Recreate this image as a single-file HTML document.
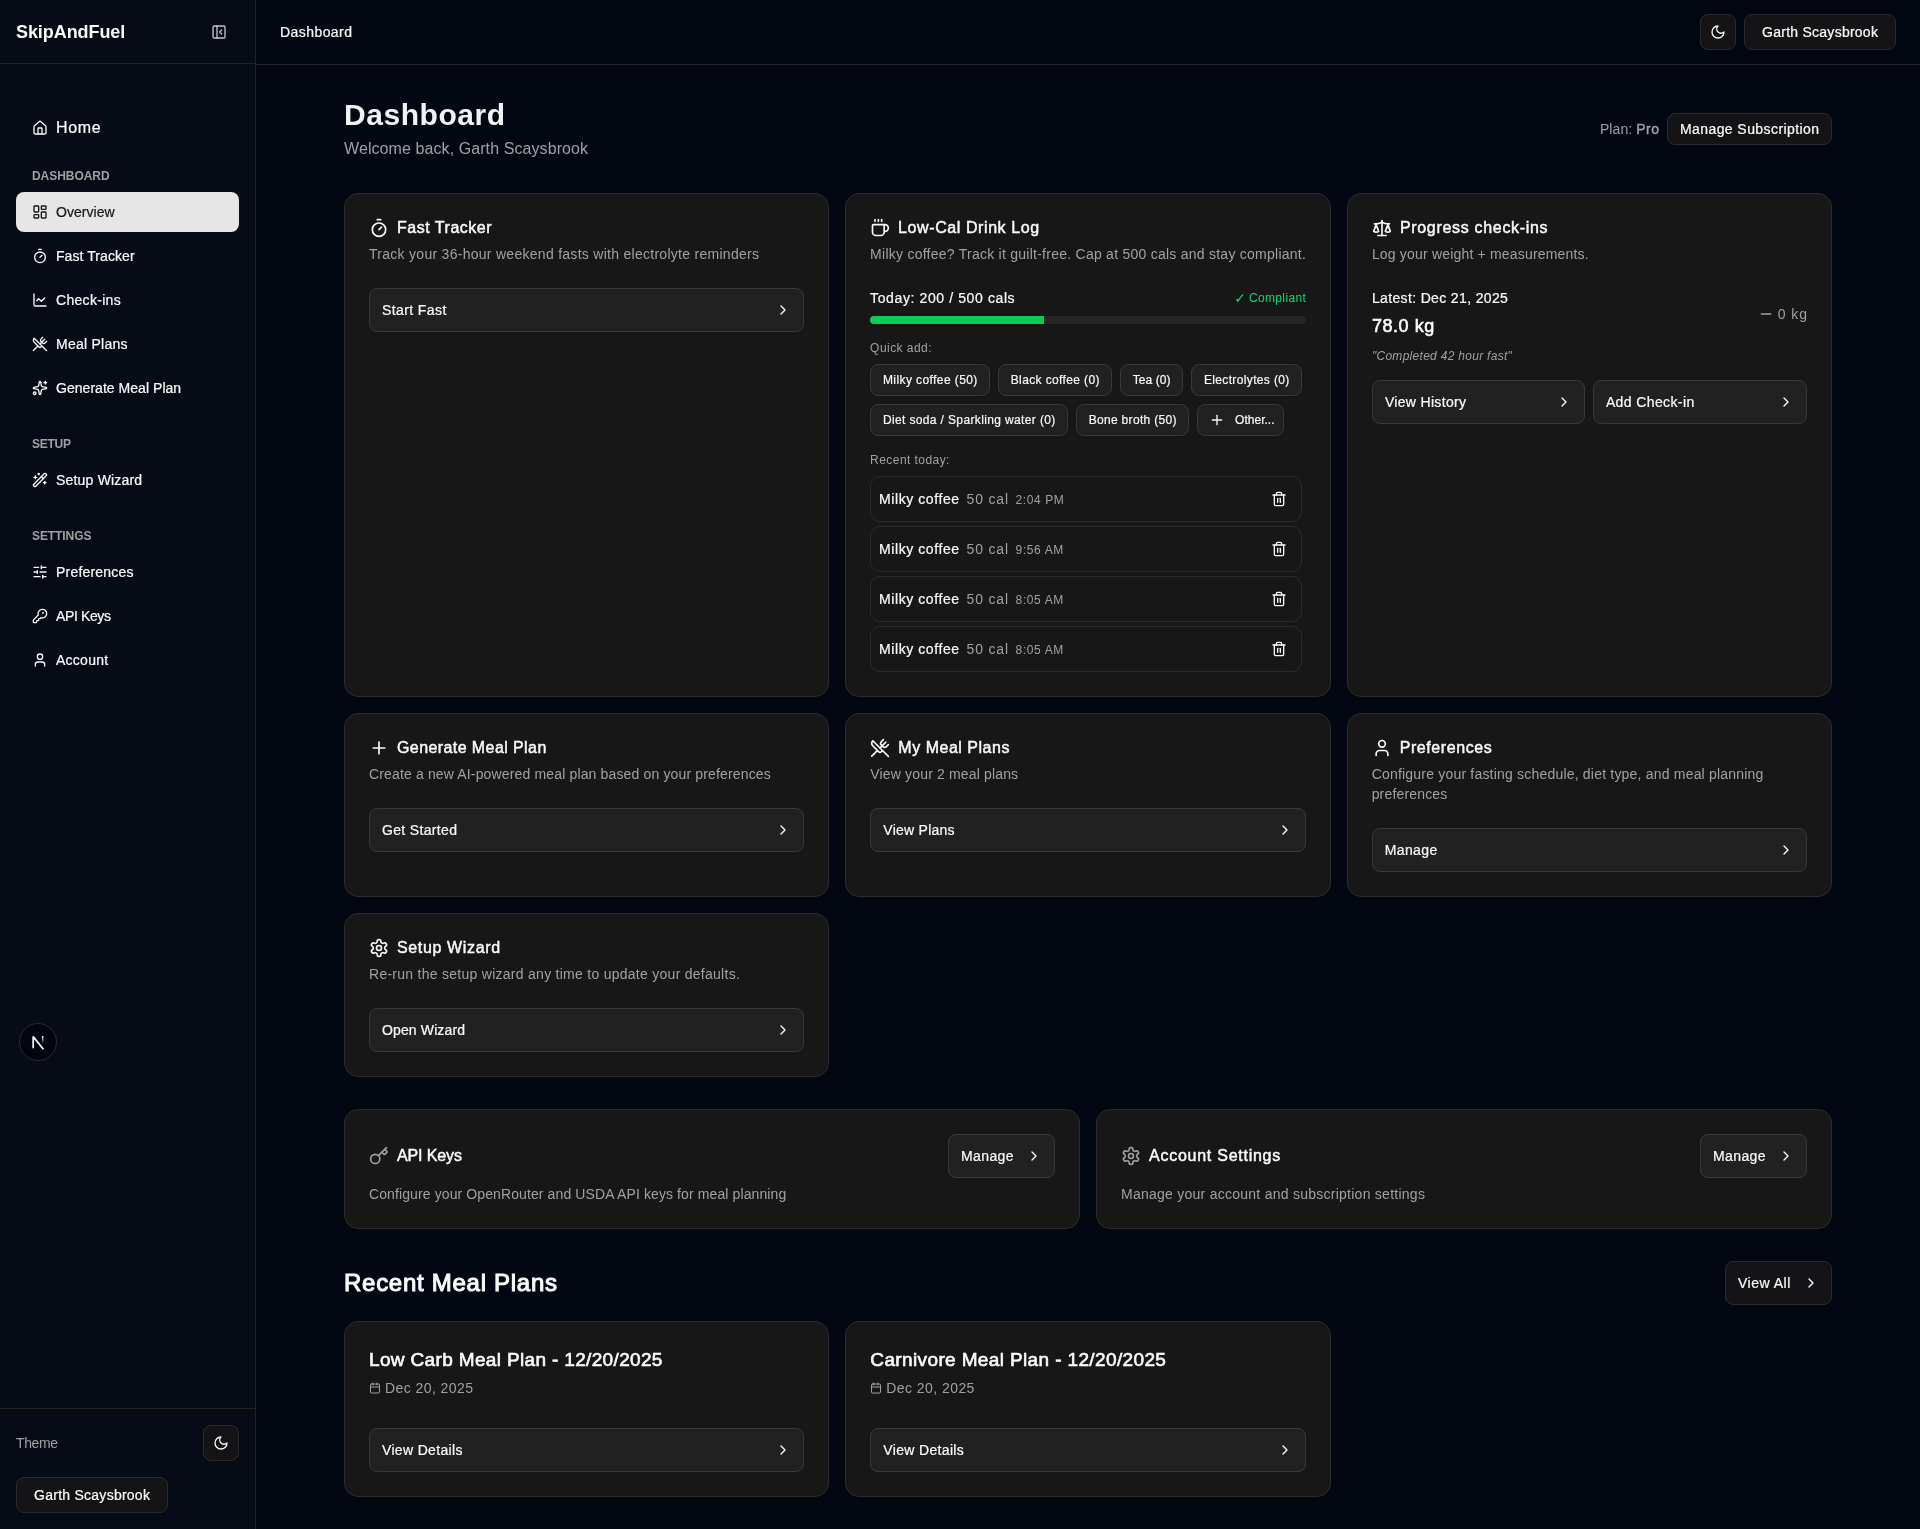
<!DOCTYPE html>
<html lang="en"><head><meta charset="utf-8"><title>SkipAndFuel - Dashboard</title>
<meta name="viewport" content="width=1920">
<style>
*{box-sizing:border-box;margin:0;padding:0}
html,body{width:1920px;height:1529px;overflow:hidden}
body{background:#030712;color:#fafafa;font-family:"Liberation Sans",sans-serif;font-size:14px;line-height:20px;position:relative;-webkit-font-smoothing:antialiased}
svg{display:block;flex:none}
span{white-space:nowrap}
.muted{color:#a1a1a1}
.med{font-weight:400;-webkit-text-stroke:.22px currentColor}
.semi{font-weight:400;-webkit-text-stroke:.029em currentColor}
a{color:inherit;text-decoration:none}

/* sidebar */
.sidebar{will-change:transform;position:absolute;left:0;top:0;width:256px;height:1529px;background:#070b16;border-right:1px solid #232323}
.sb-head{position:absolute;left:0;top:0;width:255px;height:64px;border-bottom:1px solid #232323}
.brand{position:absolute;left:16px;top:18px;font-size:18px;line-height:28px;font-weight:700}
.toggle{position:absolute;left:211px;top:24px;color:#c6c6c6}
.sb-nav{position:absolute;left:0;top:0;width:255px}
.nav{position:absolute;left:16px;width:223px;height:40px;border-radius:8px;display:flex;align-items:center;gap:8px;padding-left:16px;font-size:14px;-webkit-text-stroke:.22px currentColor}
.nav.big{font-size:16px}
.nav.active{background:#e6e6e6;color:#171717}
.navlabel{position:absolute;left:32px;height:16px;font-size:12px;line-height:16px;font-weight:700;color:#a1a1a1;letter-spacing:0}
.nextbadge{position:absolute;left:19px;top:1023px;width:38px;height:38px;border-radius:50%;background:#02050f;border:1px solid #2b2b29;display:flex;align-items:center;justify-content:center}
.sb-foot{position:absolute;left:0;top:1408px;width:255px;height:121px;border-top:1px solid #232323}
.theme-row{position:absolute;left:16px;top:16px;width:223px;height:36px;display:flex;align-items:center;justify-content:space-between}
.sb-foot .user-btn{position:absolute;left:16px;top:68px}

/* buttons */
.btn{display:inline-flex;align-items:center;border:1px solid #2b2b2e;background:#141417;border-radius:8px;color:#fafafa;font-size:14px}
.icon-btn{width:36px;height:36px;justify-content:center}
.user-btn{width:152px;height:36px;justify-content:center}

/* top bar */
.mainwrap{will-change:transform;position:absolute;left:256px;top:0;width:1664px;height:1529px}
.topbar{position:absolute;left:0;top:0;width:1664px;height:65px;border-bottom:1px solid #222326}
.crumb{position:absolute;left:24px;top:22px}
.top-right{position:absolute;right:24px;top:14px;display:flex;gap:8px}

/* content */
.content{position:absolute;left:88px;top:0;width:1488px;height:1529px}
.pagehead{position:absolute;left:0;top:97px;width:1488px;height:64px;display:flex;justify-content:space-between;align-items:center}
h1{font-size:30px;line-height:36px;font-weight:700;color:#f2f2f2}
.welcome{font-size:16px;line-height:24px;margin-top:4px}
.plan{display:flex;align-items:center;gap:8px}
.plantext{font-size:14px}
.plantext .semi{color:#a1a1a1}
.sub-btn{height:32px;width:165px;justify-content:center}

.grid3{position:absolute;left:0;width:1488px;display:grid;grid-template-columns:repeat(3,1fr);gap:16px}
.grid2{position:absolute;left:0;width:1488px;display:grid;grid-template-columns:repeat(2,1fr);gap:16px}
.card{background:#171717;border:1px solid #2c2c2c;border-radius:14px;padding:24px;position:relative}
.chead{display:flex;flex-direction:column;gap:6px}
.ctitle{display:flex;align-items:center;gap:8px;height:20px;font-size:16px;line-height:20px}
.cdesc{color:#a1a1a1;font-size:14px;line-height:20px}
.cbody{margin-top:24px}
.card .btn{background:#212121;border-color:#393939}
.wide{display:flex;justify-content:space-between;height:44px;padding:0 12px 0 12px;width:100%}
.wide svg{margin-right:0}

/* drink card */
.today{display:flex;justify-content:space-between;align-items:center;height:20px}
.ok{display:flex;align-items:center;gap:2px;color:#0bdc6c;font-size:12px}
.ck{font-family:"DejaVu Sans",sans-serif;font-size:14px;line-height:16px;position:relative;top:0;margin-right:1px}
.bar{margin-top:8px;height:8px;border-radius:4px;background:#262626;overflow:hidden}
.bar i{display:block;width:40%;height:8px;background:#0bcb55}
.small{font-size:12px;line-height:16px}
.qa{margin-top:16px}
.chips{display:flex;gap:8px;margin-top:8px}
.chip{height:32px;padding:0;justify-content:center;font-size:12px;gap:8px}
.chip.hasicon{padding:0 0 0 11px;gap:10px;justify-content:flex-start}
.chip .med{-webkit-text-stroke:.2px currentColor}
.rt{margin-top:16px;margin-bottom:8px}
.drink{height:46px;border:1px solid #2c2c2c;border-radius:10px;margin-top:4px;display:flex;align-items:center;justify-content:space-between;padding:0 4px 0 8px;width:432px}
.rt + .drink{margin-top:0}
.dl{display:flex;align-items:baseline;gap:7.500px}
.dcal{font-size:14px}
.dtime{font-size:12px}
.trash{width:36px;height:36px;display:flex;align-items:center;justify-content:center}

/* progress card */
.latest{display:flex;justify-content:space-between;align-items:center;height:52px}
.l1{font-size:14px;line-height:20px}
.l2{font-size:18px;line-height:28px;margin-top:4px}
.delta{display:flex;align-items:center;gap:4px;font-size:14px}
.quote{font-size:12px;line-height:16px;font-style:italic;margin-top:8px}
.two{display:grid;grid-template-columns:213px 1fr;gap:8px;margin-top:16px}

/* api cards */
.acard{height:120px}
.arow{display:flex;justify-content:space-between;align-items:center;height:44px}
.acard .cdesc{margin-top:6px}
.small-wide{height:44px;padding:0 12px;width:107px;justify-content:space-between}
.dim{color:#a1a1a1}

.recent{position:absolute;left:0;width:1488px;height:44px;display:flex;justify-content:space-between;align-items:center}
h2{font-size:24px;line-height:32px;font-weight:700}
.viewall{height:44px;padding:0 12px;width:107px;justify-content:space-between}

.pcard{height:176px}
.ptitle{font-size:19px;line-height:28px}
.pdate{display:flex;align-items:center;gap:4px;font-size:14px;line-height:20px;margin-top:4px}
.pcard .wide{position:absolute;left:24px;right:24px;top:106px;width:auto}
h2 .semi{-webkit-text-stroke:.042em currentColor}
.ptitle .semi,.l2 .semi{-webkit-text-stroke:.034em currentColor}

</style></head>
<body>

<aside class="sidebar">
  <div class="sb-head"><span id="t1" class="brand" style="letter-spacing:-0.076px;margin-right:0.076px">SkipAndFuel</span><span class="toggle"><svg width="16" height="16" viewBox="0 0 24 24" fill="none" stroke="currentColor" stroke-width="2" stroke-linecap="round" stroke-linejoin="round"><rect width="18" height="18" x="3" y="3" rx="2"/><path d="M9 3v18"/><path d="m16 15-3-3 3-3"/></svg></span></div>
  <nav class="sb-nav">
    <a class="nav big" style="top:108px"><svg width="16" height="16" viewBox="0 0 24 24" fill="none" stroke="currentColor" stroke-width="2" stroke-linecap="round" stroke-linejoin="round"><path d="M15 21v-8a1 1 0 0 0-1-1h-4a1 1 0 0 0-1 1v8"/><path d="M3 10a2 2 0 0 1 .709-1.528l7-5.999a2 2 0 0 1 2.582 0l7 5.999A2 2 0 0 1 21 10v9a2 2 0 0 1-2 2H5a2 2 0 0 1-2-2z"/></svg><span id="t2" style="letter-spacing:0.651px;margin-right:-0.651px">Home</span></a>
    <div class="navlabel" style="top:168px"><span id="t3" style="letter-spacing:-0.045px;margin-right:0.045px">DASHBOARD</span></div>
    <a class="nav active" style="top:192px"><svg width="16" height="16" viewBox="0 0 24 24" fill="none" stroke="currentColor" stroke-width="2" stroke-linecap="round" stroke-linejoin="round"><rect width="7" height="9" x="3" y="3" rx="1"/><rect width="7" height="5" x="14" y="3" rx="1"/><rect width="7" height="9" x="14" y="12" rx="1"/><rect width="7" height="5" x="3" y="16" rx="1"/></svg><span id="t4" style="letter-spacing:0.031px;margin-right:-0.031px">Overview</span></a>
    <a class="nav" style="top:236px"><svg width="16" height="16" viewBox="0 0 24 24" fill="none" stroke="currentColor" stroke-width="2" stroke-linecap="round" stroke-linejoin="round"><line x1="10" x2="14" y1="2" y2="2"/><line x1="12" x2="15" y1="14" y2="11"/><circle cx="12" cy="14" r="8"/></svg><span id="t5" style="letter-spacing:0.073px;margin-right:-0.073px">Fast Tracker</span></a>
    <a class="nav" style="top:280px"><svg width="16" height="16" viewBox="0 0 24 24" fill="none" stroke="currentColor" stroke-width="2" stroke-linecap="round" stroke-linejoin="round"><path d="M3 3v16a2 2 0 0 0 2 2h16"/><path d="m19 9-5 5-4-4-3 3"/></svg><span id="t6" style="letter-spacing:0.309px;margin-right:-0.309px">Check-ins</span></a>
    <a class="nav" style="top:324px"><svg width="16" height="16" viewBox="0 0 24 24" fill="none" stroke="currentColor" stroke-width="2" stroke-linecap="round" stroke-linejoin="round"><path d="m16 2-2.3 2.300a3 3 0 0 0 0 4.200l1.800 1.800a3 3 0 0 0 4.200 0L22 8"/><path d="M15 15 3.300 3.300a4.200 4.200 0 0 0 0 6l7.300 7.300c.7.700 2 .7 2.800 0L15 15Zm0 0 7 7"/><path d="m2.100 21.800 6.400-6.300"/><path d="m19 5-7 7"/></svg><span id="t7" style="letter-spacing:0.243px;margin-right:-0.243px">Meal Plans</span></a>
    <a class="nav" style="top:368px"><svg width="16" height="16" viewBox="0 0 24 24" fill="none" stroke="currentColor" stroke-width="2" stroke-linecap="round" stroke-linejoin="round"><path d="M11.017 2.814a1 1 0 0 1 1.966 0l1.051 5.558a2 2 0 0 0 1.594 1.594l5.558 1.051a1 1 0 0 1 0 1.966l-5.558 1.051a2 2 0 0 0-1.594 1.594l-1.051 5.558a1 1 0 0 1-1.966 0l-1.051-5.558a2 2 0 0 0-1.594-1.594l-5.558-1.051a1 1 0 0 1 0-1.966l5.558-1.051a2 2 0 0 0 1.594-1.594z"/><path d="M20 2v4"/><path d="M22 4h-4"/><circle cx="4" cy="20" r="2"/></svg><span id="t8" style="letter-spacing:0.037px;margin-right:-0.037px">Generate Meal Plan</span></a>
    <div class="navlabel" style="top:436px"><span id="t9" style="letter-spacing:-0.254px;margin-right:0.254px">SETUP</span></div>
    <a class="nav" style="top:460px"><svg width="16" height="16" viewBox="0 0 24 24" fill="none" stroke="currentColor" stroke-width="2" stroke-linecap="round" stroke-linejoin="round"><path d="m21.640 3.640-1.280-1.280a1.210 1.210 0 0 0-1.720 0L2.360 18.640a1.210 1.210 0 0 0 0 1.720l1.280 1.280a1.200 1.200 0 0 0 1.720 0L21.640 5.360a1.200 1.200 0 0 0 0-1.720"/><path d="m14 7 3 3"/><path d="M5 6v4"/><path d="M19 14v4"/><path d="M10 2v2"/><path d="M7 8H3"/><path d="M21 16h-4"/><path d="M11 3H9"/></svg><span id="t10" style="letter-spacing:0.192px;margin-right:-0.192px">Setup Wizard</span></a>
    <div class="navlabel" style="top:528px"><span id="t11" style="letter-spacing:-0.085px;margin-right:0.085px">SETTINGS</span></div>
    <a class="nav" style="top:552px"><svg width="16" height="16" viewBox="0 0 24 24" fill="none" stroke="currentColor" stroke-width="2" stroke-linecap="round" stroke-linejoin="round"><path d="M10 5H3"/><path d="M12 19H3"/><path d="M14 3v4"/><path d="M16 17v4"/><path d="M21 12h-9"/><path d="M21 19h-5"/><path d="M21 5h-7"/><path d="M8 10v4"/><path d="M8 12H3"/></svg><span id="t12" style="letter-spacing:0.2px;margin-right:-0.2px">Preferences</span></a>
    <a class="nav" style="top:596px"><svg width="16" height="16" viewBox="0 0 24 24" fill="none" stroke="currentColor" stroke-width="2" stroke-linecap="round" stroke-linejoin="round"><path d="M2.586 17.414A2 2 0 0 0 2 18.828V21a1 1 0 0 0 1 1h3a1 1 0 0 0 1-1v-1a1 1 0 0 1 1-1h1a1 1 0 0 0 1-1v-1a1 1 0 0 1 1-1h.172a2 2 0 0 0 1.414-.586l.814-.814a6.500 6.500 0 1 0-4-4z"/><circle cx="16.500" cy="7.500" r=".5" fill="currentColor"/></svg><span id="t13" style="letter-spacing:-0.371px;margin-right:0.371px">API Keys</span></a>
    <a class="nav" style="top:640px"><svg width="16" height="16" viewBox="0 0 24 24" fill="none" stroke="currentColor" stroke-width="2" stroke-linecap="round" stroke-linejoin="round"><path d="M19 21v-2a4 4 0 0 0-4-4H9a4 4 0 0 0-4 4v2"/><circle cx="12" cy="7" r="4"/></svg><span id="t14" style="letter-spacing:0.254px;margin-right:-0.254px">Account</span></a>
  </nav>
  <div class="nextbadge"><svg width="36" height="36" viewBox="0 0 36 36" fill="none">
    <defs><linearGradient id="ng" gradientUnits="userSpaceOnUse" x1="0" y1="12" x2="0" y2="20"><stop offset="0" stop-color="#fff"/><stop offset="1" stop-color="#fff" stop-opacity="0"/></linearGradient></defs>
    <path d="M13.200 24.200V12.600L23.400 25.200" stroke="#fff" stroke-width="1.700" stroke-linejoin="bevel"/>
    <path d="M22.700 12v8" stroke="url(#ng)" stroke-width="1.500"/>
  </svg></div>
  <div class="sb-foot">
    <div class="theme-row"><span id="t15" class="muted" style="letter-spacing:-0.395px;margin-right:0.395px">Theme</span><span class="btn icon-btn"><svg width="16" height="16" viewBox="0 0 24 24" fill="none" stroke="currentColor" stroke-width="2" stroke-linecap="round" stroke-linejoin="round"><path d="M12 3a6 6 0 0 0 9 9 9 9 0 1 1-9-9Z"/></svg></span></div>
    <span class="btn user-btn"><span id="t16" class="med" style="letter-spacing:0.252px;margin-right:-0.252px">Garth Scaysbrook</span></span>
  </div>
</aside>
<div class="mainwrap">

<header class="topbar">
  <span id="t17" class="med crumb" style="letter-spacing:0.434px;margin-right:-0.434px">Dashboard</span>
  <div class="top-right"><span class="btn icon-btn"><svg width="16" height="16" viewBox="0 0 24 24" fill="none" stroke="currentColor" stroke-width="2" stroke-linecap="round" stroke-linejoin="round"><path d="M12 3a6 6 0 0 0 9 9 9 9 0 1 1-9-9Z"/></svg></span><span class="btn user-btn"><span id="t18" class="med" style="letter-spacing:0.252px;margin-right:-0.252px">Garth Scaysbrook</span></span></div>
</header>

<main class="content">
  <div class="pagehead">
    <div><h1><span id="t68" style="letter-spacing:0.552px;margin-right:-0.552px">Dashboard</span></h1><p class="welcome muted"><span id="t69" style="letter-spacing:0.084px;margin-right:-0.084px">Welcome back, Garth Scaysbrook</span></p></div>
    <div class="plan"><span class="muted plantext"><span id="t70" style="letter-spacing:0.1px;margin-right:-0.1px">Plan: </span><span id="t71" class="semi" style="letter-spacing:0.5px;margin-right:-0.5px">Pro</span></span><span class="btn sub-btn"><span id="t72" class="med" style="letter-spacing:0.421px;margin-right:-0.421px">Manage Subscription</span></span></div>
  </div>
  <div class="grid3" style="top:193px"><section class="card" style="height:504px"><div class="chead"><div class="ctitle"><svg width="20" height="20" viewBox="0 0 24 24" fill="none" stroke="currentColor" stroke-width="2" stroke-linecap="round" stroke-linejoin="round"><line x1="10" x2="14" y1="2" y2="2"/><line x1="12" x2="15" y1="14" y2="11"/><circle cx="12" cy="14" r="8"/></svg><span id="t20" class="semi" style="letter-spacing:0.514px;margin-right:-0.514px">Fast Tracker</span></div><p class="cdesc"><span id="t19" style="letter-spacing:0.28px;margin-right:-0.28px">Track your 36-hour weekend fasts with electrolyte reminders</span></p></div><div class="cbody"><span class="btn wide"><span id="t21" class="med" style="letter-spacing:0.401px;margin-right:-0.401px">Start Fast</span><svg width="16" height="16" viewBox="0 0 24 24" fill="none" stroke="currentColor" stroke-width="2" stroke-linecap="round" stroke-linejoin="round"><path d="m9 18 6-6-6-6"/></svg></span></div></section><section class="card" style="height:504px"><div class="chead"><div class="ctitle"><svg width="20" height="20" viewBox="0 0 24 24" fill="none" stroke="currentColor" stroke-width="2" stroke-linecap="round" stroke-linejoin="round"><path d="M10 2v2"/><path d="M14 2v2"/><path d="M16 8a1 1 0 0 1 1 1v8a4 4 0 0 1-4 4H7a4 4 0 0 1-4-4V9a1 1 0 0 1 1-1h14a4 4 0 1 1 0 8h-1"/><path d="M6 2v2"/></svg><span id="t23" class="semi" style="letter-spacing:0.586px;margin-right:-0.586px">Low-Cal Drink Log</span></div><p class="cdesc"><span id="t22" style="letter-spacing:0.252px;margin-right:-0.252px">Milky coffee? Track it guilt-free. Cap at 500 cals and stay compliant.</span></p></div>
<div class="cbody">
  <div class="today"><span id="t24" class="med" style="letter-spacing:0.609px;margin-right:-0.609px">Today: 200 / 500 cals</span><span class="ok"><span class="ck">&#10003;</span><span id="t25" style="letter-spacing:0.371px;margin-right:-0.371px">Compliant</span></span></div>
  <div class="bar"><i></i></div>
  <div class="small muted qa"><span id="t26" style="letter-spacing:0.454px;margin-right:-0.454px">Quick add:</span></div>
  <div class="chips"><span class="btn chip" style="width:120px"><span id="t27" class="med" style="letter-spacing:0.41px;margin-right:-0.41px">Milky coffee (50)</span></span><span class="btn chip" style="width:114px"><span id="t28" class="med" style="letter-spacing:0.37px;margin-right:-0.37px">Black coffee (0)</span></span><span class="btn chip" style="width:63px"><span id="t29" class="med" style="letter-spacing:0.04px;margin-right:-0.04px">Tea (0)</span></span><span class="btn chip" style="width:111px"><span id="t30" class="med" style="letter-spacing:0.355px;margin-right:-0.355px">Electrolytes (0)</span></span></div>
  <div class="chips"><span class="btn chip" style="width:198px"><span id="t31" class="med" style="letter-spacing:0.368px;margin-right:-0.368px">Diet soda / Sparkling water (0)</span></span><span class="btn chip" style="width:113px"><span id="t32" class="med" style="letter-spacing:0.323px;margin-right:-0.323px">Bone broth (50)</span></span><span class="btn chip hasicon" style="width:87px"><svg width="16" height="16" viewBox="0 0 24 24" fill="none" stroke="currentColor" stroke-width="2" stroke-linecap="round" stroke-linejoin="round"><path d="M5 12h14"/><path d="M12 5v14"/></svg><span id="t33" class="med" style="letter-spacing:-0.0px;margin-right:0.0px">Other...</span></span></div>
  <div class="small muted rt"><span id="t34" style="letter-spacing:0.438px;margin-right:-0.438px">Recent today:</span></div>
  <div class="drink"><div class="dl"><span id="t35" class="med dname" style="letter-spacing:0.57px;margin-right:-0.57px">Milky coffee</span><span id="t36" class="muted dcal" style="letter-spacing:0.838px;margin-right:-0.838px">50 cal</span><span id="t37" class="muted dtime" style="letter-spacing:0.583px;margin-right:-0.583px">2:04 PM</span></div><span class="trash"><svg width="16" height="16" viewBox="0 0 24 24" fill="none" stroke="currentColor" stroke-width="2" stroke-linecap="round" stroke-linejoin="round"><path d="M3 6h18"/><path d="M19 6v14c0 1-1 2-2 2H7c-1 0-2-1-2-2V6"/><path d="M8 6V4c0-1 1-2 2-2h4c1 0 2 1 2 2v2"/><line x1="10" x2="10" y1="11" y2="17"/><line x1="14" x2="14" y1="11" y2="17"/></svg></span></div><div class="drink"><div class="dl"><span id="t38" class="med dname" style="letter-spacing:0.57px;margin-right:-0.57px">Milky coffee</span><span id="t39" class="muted dcal" style="letter-spacing:0.838px;margin-right:-0.838px">50 cal</span><span id="t40" class="muted dtime" style="letter-spacing:0.611px;margin-right:-0.611px">9:56 AM</span></div><span class="trash"><svg width="16" height="16" viewBox="0 0 24 24" fill="none" stroke="currentColor" stroke-width="2" stroke-linecap="round" stroke-linejoin="round"><path d="M3 6h18"/><path d="M19 6v14c0 1-1 2-2 2H7c-1 0-2-1-2-2V6"/><path d="M8 6V4c0-1 1-2 2-2h4c1 0 2 1 2 2v2"/><line x1="10" x2="10" y1="11" y2="17"/><line x1="14" x2="14" y1="11" y2="17"/></svg></span></div><div class="drink"><div class="dl"><span id="t41" class="med dname" style="letter-spacing:0.57px;margin-right:-0.57px">Milky coffee</span><span id="t42" class="muted dcal" style="letter-spacing:0.838px;margin-right:-0.838px">50 cal</span><span id="t43" class="muted dtime" style="letter-spacing:0.611px;margin-right:-0.611px">8:05 AM</span></div><span class="trash"><svg width="16" height="16" viewBox="0 0 24 24" fill="none" stroke="currentColor" stroke-width="2" stroke-linecap="round" stroke-linejoin="round"><path d="M3 6h18"/><path d="M19 6v14c0 1-1 2-2 2H7c-1 0-2-1-2-2V6"/><path d="M8 6V4c0-1 1-2 2-2h4c1 0 2 1 2 2v2"/><line x1="10" x2="10" y1="11" y2="17"/><line x1="14" x2="14" y1="11" y2="17"/></svg></span></div><div class="drink"><div class="dl"><span id="t44" class="med dname" style="letter-spacing:0.57px;margin-right:-0.57px">Milky coffee</span><span id="t45" class="muted dcal" style="letter-spacing:0.838px;margin-right:-0.838px">50 cal</span><span id="t46" class="muted dtime" style="letter-spacing:0.611px;margin-right:-0.611px">8:05 AM</span></div><span class="trash"><svg width="16" height="16" viewBox="0 0 24 24" fill="none" stroke="currentColor" stroke-width="2" stroke-linecap="round" stroke-linejoin="round"><path d="M3 6h18"/><path d="M19 6v14c0 1-1 2-2 2H7c-1 0-2-1-2-2V6"/><path d="M8 6V4c0-1 1-2 2-2h4c1 0 2 1 2 2v2"/><line x1="10" x2="10" y1="11" y2="17"/><line x1="14" x2="14" y1="11" y2="17"/></svg></span></div>
</div></section><section class="card" style="height:504px"><div class="chead"><div class="ctitle"><svg width="20" height="20" viewBox="0 0 24 24" fill="none" stroke="currentColor" stroke-width="2" stroke-linecap="round" stroke-linejoin="round"><path d="m16 16 3-8 3 8c-.870.650-1.920 1-3 1s-2.130-.350-3-1Z"/><path d="m2 16 3-8 3 8c-.870.650-1.920 1-3 1s-2.130-.350-3-1Z"/><path d="M7 21h10"/><path d="M12 3v18"/><path d="M3 7h2c2 0 5-1 7-2 2 1 5 2 7 2h2"/></svg><span id="t48" class="semi" style="letter-spacing:0.687px;margin-right:-0.687px">Progress check-ins</span></div><p class="cdesc"><span id="t47" style="letter-spacing:0.184px;margin-right:-0.184px">Log your weight + measurements.</span></p></div>
<div class="cbody">
  <div class="latest"><div><div class="l1"><span id="t49" class="med" style="letter-spacing:0.356px;margin-right:-0.356px">Latest: Dec 21, 2025</span></div><div class="l2"><span id="t50" class="semi" style="letter-spacing:0.551px;margin-right:-0.551px">78.0 kg</span></div></div>
  <div class="delta muted"><svg width="16" height="16" viewBox="0 0 24 24" fill="none" stroke="currentColor" stroke-width="2" stroke-linecap="round" stroke-linejoin="round"><path d="M5 12h14"/></svg><span id="t51" style="letter-spacing:0.91px;margin-right:-0.91px">0 kg</span></div></div>
  <div class="quote muted"><span id="t52" style="letter-spacing:0.29px;margin-right:-0.29px">&quot;Completed 42 hour fast&quot;</span></div>
  <div class="two"><span class="btn wide"><span id="t53" class="med" style="letter-spacing:0.325px;margin-right:-0.325px">View History</span><svg width="16" height="16" viewBox="0 0 24 24" fill="none" stroke="currentColor" stroke-width="2" stroke-linecap="round" stroke-linejoin="round"><path d="m9 18 6-6-6-6"/></svg></span><span class="btn wide"><span id="t54" class="med" style="letter-spacing:0.389px;margin-right:-0.389px">Add Check-in</span><svg width="16" height="16" viewBox="0 0 24 24" fill="none" stroke="currentColor" stroke-width="2" stroke-linecap="round" stroke-linejoin="round"><path d="m9 18 6-6-6-6"/></svg></span></div>
</div></section></div>
  <div class="grid3" style="top:713px"><section class="card" style="height:184px"><div class="chead"><div class="ctitle"><svg width="20" height="20" viewBox="0 0 24 24" fill="none" stroke="currentColor" stroke-width="2" stroke-linecap="round" stroke-linejoin="round"><path d="M5 12h14"/><path d="M12 5v14"/></svg><span id="t56" class="semi" style="letter-spacing:0.411px;margin-right:-0.411px">Generate Meal Plan</span></div><p class="cdesc"><span id="t55" style="letter-spacing:0.15px;margin-right:-0.15px">Create a new AI-powered meal plan based on your preferences</span></p></div><div class="cbody"><span class="btn wide"><span id="t57" class="med" style="letter-spacing:0.341px;margin-right:-0.341px">Get Started</span><svg width="16" height="16" viewBox="0 0 24 24" fill="none" stroke="currentColor" stroke-width="2" stroke-linecap="round" stroke-linejoin="round"><path d="m9 18 6-6-6-6"/></svg></span></div></section><section class="card" style="height:184px"><div class="chead"><div class="ctitle"><svg width="20" height="20" viewBox="0 0 24 24" fill="none" stroke="currentColor" stroke-width="2" stroke-linecap="round" stroke-linejoin="round"><path d="m16 2-2.3 2.300a3 3 0 0 0 0 4.200l1.800 1.800a3 3 0 0 0 4.200 0L22 8"/><path d="M15 15 3.300 3.300a4.200 4.200 0 0 0 0 6l7.300 7.300c.7.700 2 .7 2.800 0L15 15Zm0 0 7 7"/><path d="m2.100 21.800 6.400-6.300"/><path d="m19 5-7 7"/></svg><span id="t59" class="semi" style="letter-spacing:0.515px;margin-right:-0.515px">My Meal Plans</span></div><p class="cdesc"><span id="t58" style="letter-spacing:0.156px;margin-right:-0.156px">View your 2 meal plans</span></p></div><div class="cbody"><span class="btn wide"><span id="t60" class="med" style="letter-spacing:0.251px;margin-right:-0.251px">View Plans</span><svg width="16" height="16" viewBox="0 0 24 24" fill="none" stroke="currentColor" stroke-width="2" stroke-linecap="round" stroke-linejoin="round"><path d="m9 18 6-6-6-6"/></svg></span></div></section><section class="card" style="height:184px"><div class="chead"><div class="ctitle"><svg width="20" height="20" viewBox="0 0 24 24" fill="none" stroke="currentColor" stroke-width="2" stroke-linecap="round" stroke-linejoin="round"><path d="M19 21v-2a4 4 0 0 0-4-4H9a4 4 0 0 0-4 4v2"/><circle cx="12" cy="7" r="4"/></svg><span id="t63" class="semi" style="letter-spacing:0.583px;margin-right:-0.583px">Preferences</span></div><p class="cdesc"><span id="t61" style="letter-spacing:0.198px;margin-right:-0.198px">Configure your fasting schedule, diet type, and meal planning</span><br><span id="t62" style="letter-spacing:0.166px;margin-right:-0.166px">preferences</span></p></div><div class="cbody"><span class="btn wide"><span id="t64" class="med" style="letter-spacing:0.401px;margin-right:-0.401px">Manage</span><svg width="16" height="16" viewBox="0 0 24 24" fill="none" stroke="currentColor" stroke-width="2" stroke-linecap="round" stroke-linejoin="round"><path d="m9 18 6-6-6-6"/></svg></span></div></section></div>
  <div class="grid3" style="top:913px"><section class="card" style="height:164px"><div class="chead"><div class="ctitle"><svg width="20" height="20" viewBox="0 0 24 24" fill="none" stroke="currentColor" stroke-width="2" stroke-linecap="round" stroke-linejoin="round"><path d="M12.220 2h-.440a2 2 0 0 0-2 2v.180a2 2 0 0 1-1 1.730l-.430.250a2 2 0 0 1-2 0l-.150-.080a2 2 0 0 0-2.730.730l-.220.380a2 2 0 0 0 .730 2.730l.150.100a2 2 0 0 1 1 1.720v.510a2 2 0 0 1-1 1.740l-.150.090a2 2 0 0 0-.730 2.730l.220.380a2 2 0 0 0 2.730.730l.150-.080a2 2 0 0 1 2 0l.430.250a2 2 0 0 1 1 1.730V20a2 2 0 0 0 2 2h.440a2 2 0 0 0 2-2v-.180a2 2 0 0 1 1-1.730l.430-.250a2 2 0 0 1 2 0l.150.080a2 2 0 0 0 2.730-.730l.220-.390a2 2 0 0 0-.730-2.730l-.150-.080a2 2 0 0 1-1-1.740v-.500a2 2 0 0 1 1-1.740l.150-.090a2 2 0 0 0 .730-2.730l-.220-.380a2 2 0 0 0-2.730-.730l-.150.080a2 2 0 0 1-2 0l-.430-.250a2 2 0 0 1-1-1.730V4a2 2 0 0 0-2-2z"/><circle cx="12" cy="12" r="3"/></svg><span id="t66" class="semi" style="letter-spacing:0.641px;margin-right:-0.641px">Setup Wizard</span></div><p class="cdesc"><span id="t65" style="letter-spacing:0.271px;margin-right:-0.271px">Re-run the setup wizard any time to update your defaults.</span></p></div><div class="cbody"><span class="btn wide"><span id="t67" class="med" style="letter-spacing:0.13px;margin-right:-0.13px">Open Wizard</span><svg width="16" height="16" viewBox="0 0 24 24" fill="none" stroke="currentColor" stroke-width="2" stroke-linecap="round" stroke-linejoin="round"><path d="m9 18 6-6-6-6"/></svg></span></div></section></div>
  <div class="grid2" style="top:1109px"><section class="card acard"><div class="arow"><div class="ctitle"><svg class="dim" width="20" height="20" viewBox="0 0 24 24" fill="none" stroke="currentColor" stroke-width="2" stroke-linecap="round" stroke-linejoin="round"><path d="m15.500 7.500 2.300 2.300a1 1 0 0 0 1.400 0l2.100-2.100a1 1 0 0 0 0-1.400L19 4"/><path d="m21 2-9.600 9.600"/><circle cx="7.500" cy="15.500" r="5.500"/></svg><span id="t73" class="semi" style="letter-spacing:-0.116px;margin-right:0.116px">API Keys</span></div><span class="btn small-wide"><span id="t74" class="med" style="letter-spacing:0.401px;margin-right:-0.401px">Manage</span><svg width="16" height="16" viewBox="0 0 24 24" fill="none" stroke="currentColor" stroke-width="2" stroke-linecap="round" stroke-linejoin="round"><path d="m9 18 6-6-6-6"/></svg></span></div><p class="cdesc"><span id="t75" style="letter-spacing:0.105px;margin-right:-0.105px">Configure your OpenRouter and USDA API keys for meal planning</span></p></section><section class="card acard"><div class="arow"><div class="ctitle"><svg class="dim" width="20" height="20" viewBox="0 0 24 24" fill="none" stroke="currentColor" stroke-width="2" stroke-linecap="round" stroke-linejoin="round"><path d="M12.220 2h-.440a2 2 0 0 0-2 2v.180a2 2 0 0 1-1 1.730l-.430.250a2 2 0 0 1-2 0l-.150-.080a2 2 0 0 0-2.730.730l-.220.380a2 2 0 0 0 .730 2.730l.150.100a2 2 0 0 1 1 1.720v.510a2 2 0 0 1-1 1.740l-.150.090a2 2 0 0 0-.730 2.730l.220.380a2 2 0 0 0 2.730.730l.150-.080a2 2 0 0 1 2 0l.430.250a2 2 0 0 1 1 1.730V20a2 2 0 0 0 2 2h.440a2 2 0 0 0 2-2v-.180a2 2 0 0 1 1-1.730l.430-.250a2 2 0 0 1 2 0l.150.080a2 2 0 0 0 2.730-.730l.220-.390a2 2 0 0 0-.730-2.730l-.150-.080a2 2 0 0 1-1-1.740v-.500a2 2 0 0 1 1-1.740l.150-.090a2 2 0 0 0 .730-2.730l-.220-.380a2 2 0 0 0-2.730-.730l-.150.080a2 2 0 0 1-2 0l-.430-.250a2 2 0 0 1-1-1.730V4a2 2 0 0 0-2-2z"/><circle cx="12" cy="12" r="3"/></svg><span id="t76" class="semi" style="letter-spacing:0.745px;margin-right:-0.745px">Account Settings</span></div><span class="btn small-wide"><span id="t77" class="med" style="letter-spacing:0.401px;margin-right:-0.401px">Manage</span><svg width="16" height="16" viewBox="0 0 24 24" fill="none" stroke="currentColor" stroke-width="2" stroke-linecap="round" stroke-linejoin="round"><path d="m9 18 6-6-6-6"/></svg></span></div><p class="cdesc"><span id="t78" style="letter-spacing:0.256px;margin-right:-0.256px">Manage your account and subscription settings</span></p></section></div>
  <div class="recent" style="top:1261px"><h2><span id="t79" class="semi" style="letter-spacing:0.723px;margin-right:-0.723px">Recent Meal Plans</span></h2><span class="btn viewall"><span id="t80" class="med" style="letter-spacing:0.505px;margin-right:-0.505px">View All</span><svg width="16" height="16" viewBox="0 0 24 24" fill="none" stroke="currentColor" stroke-width="2" stroke-linecap="round" stroke-linejoin="round"><path d="m9 18 6-6-6-6"/></svg></span></div>
  <div class="grid3" style="top:1321px"><section class="card pcard"><div class="ptitle"><span id="t81" class="semi" style="letter-spacing:0.346px;margin-right:-0.346px">Low Carb Meal Plan - 12/20/2025</span></div><div class="pdate muted"><svg width="12" height="12" viewBox="0 0 24 24" fill="none" stroke="currentColor" stroke-width="2" stroke-linecap="round" stroke-linejoin="round"><path d="M8 2v4"/><path d="M16 2v4"/><rect width="18" height="18" x="3" y="4" rx="2"/><path d="M3 10h18"/></svg><span id="t82" style="letter-spacing:0.435px;margin-right:-0.435px">Dec 20, 2025</span></div><span class="btn wide"><span id="t83" class="med" style="letter-spacing:0.338px;margin-right:-0.338px">View Details</span><svg width="16" height="16" viewBox="0 0 24 24" fill="none" stroke="currentColor" stroke-width="2" stroke-linecap="round" stroke-linejoin="round"><path d="m9 18 6-6-6-6"/></svg></span></section><section class="card pcard"><div class="ptitle"><span id="t84" class="semi" style="letter-spacing:0.37px;margin-right:-0.37px">Carnivore Meal Plan - 12/20/2025</span></div><div class="pdate muted"><svg width="12" height="12" viewBox="0 0 24 24" fill="none" stroke="currentColor" stroke-width="2" stroke-linecap="round" stroke-linejoin="round"><path d="M8 2v4"/><path d="M16 2v4"/><rect width="18" height="18" x="3" y="4" rx="2"/><path d="M3 10h18"/></svg><span id="t85" style="letter-spacing:0.435px;margin-right:-0.435px">Dec 20, 2025</span></div><span class="btn wide"><span id="t86" class="med" style="letter-spacing:0.338px;margin-right:-0.338px">View Details</span><svg width="16" height="16" viewBox="0 0 24 24" fill="none" stroke="currentColor" stroke-width="2" stroke-linecap="round" stroke-linejoin="round"><path d="m9 18 6-6-6-6"/></svg></span></section></div>
</main>
</div>
</body></html>
